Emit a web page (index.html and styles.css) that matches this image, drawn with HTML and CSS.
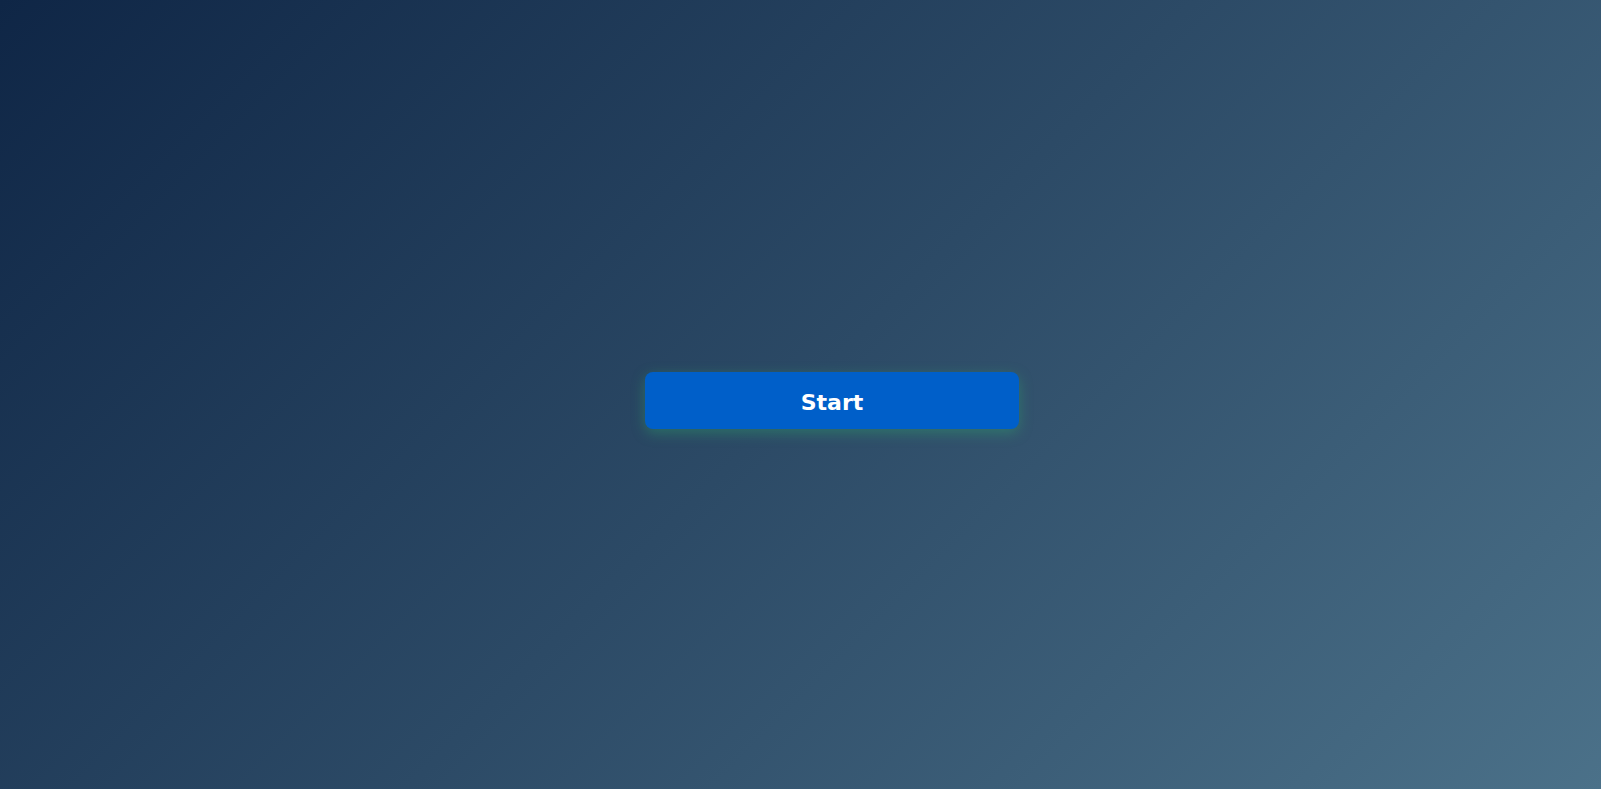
FILE: index.html
```html
<!DOCTYPE html>
<html>
<head>
<meta charset="utf-8">
<link rel="stylesheet" href="styles.css">
</head>
<body>
<main class="stage">
  <button class="start-btn">Start</button>
</main>
</body>
</html>
```

FILE: styles.css
```css
html, body {
  margin: 0;
  height: 100%;
}
body {
  background: linear-gradient(135deg, #0f2646 0%, #2c4a66 50%, #4b7189 100%);
  font-family: "DejaVu Sans", Verdana, sans-serif;
}
.stage {
  height: 100%;
  box-sizing: border-box;
  display: flex;
  align-items: center;
  justify-content: center;
  padding: 12px 0 0 63px;
}
.start-btn {
  width: 374px;
  height: 57px;
  padding: 4px 0 0;
  border: none;
  border-radius: 8px;
  background: #005fc9;
  color: #ffffff;
  font-family: "DejaVu Sans", Verdana, sans-serif;
  font-weight: bold;
  font-size: 22px;
  box-shadow: 0 4px 14px rgba(46, 190, 110, 0.35);
  cursor: pointer;
}
```
